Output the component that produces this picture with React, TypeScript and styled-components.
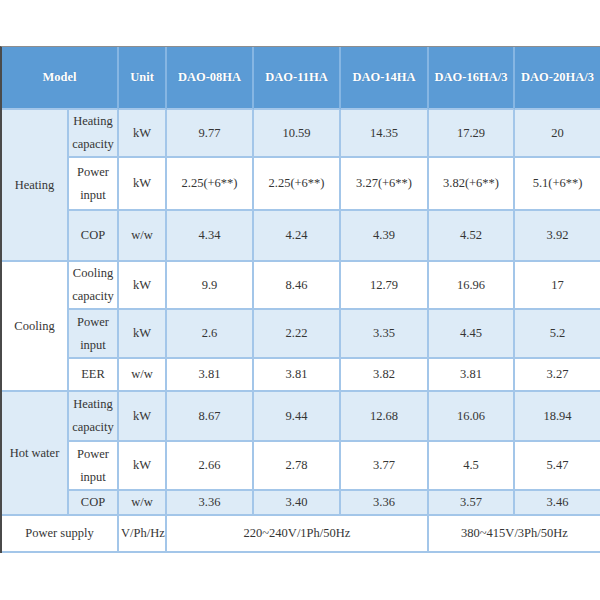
import React from 'react';
import styled, { createGlobalStyle } from 'styled-components';

const serif = '"Liberation Serif", "Times New Roman", serif';

const Global = createGlobalStyle`
  html, body { margin: 0; padding: 0; background: #ffffff; }
  body { font-family: ${serif}; }
`;

const Page = styled.div`
  width: 600px;
  height: 600px;
  padding-top: 46px;
  box-sizing: border-box;
  overflow: hidden;
  background: #ffffff;
`;

const Frame = styled.div`
  width: 602px;
  border-top: 1px solid #8e8e8e;
  border-left: 2px solid #4a4a4a;
  box-sizing: border-box;
`;

const Table = styled.table`
  width: 600px;
  table-layout: fixed;
  border-collapse: separate;
  border-spacing: 0;
  font-family: ${serif};
  font-size: 12.5px;
  line-height: 23px;
  color: #353535;
`;

const Row = styled.tr<{ $h: number }>`
  height: ${(p) => p.$h}px;
`;

const Head = styled.th`
  background: #5b9bd5;
  color: #ffffff;
  font-family: ${serif};
  font-size: 12.5px;
  font-weight: bold;
  text-align: center;
  vertical-align: middle;
  padding: 0 2px;
  border-right: 2px solid #86b6e3;
  border-bottom: 2px solid #a3c6e9;
  box-sizing: border-box;
  text-shadow: 0 0 1px rgba(40, 70, 110, 0.35);
`;

const Cell = styled.td<{ $light?: boolean }>`
  background: ${(p) => (p.$light ? '#ddebf7' : '#ffffff')};
  font-family: ${serif};
  font-size: 12.5px;
  line-height: 23px;
  color: #353535;
  text-align: center;
  vertical-align: middle;
  padding: 0 2px;
  border-right: 2px solid #a3c6e9;
  border-bottom: 2px solid #a3c6e9;
  box-sizing: border-box;
  white-space: normal;
`;

const NoWrap = styled(Cell)`
  white-space: nowrap;
`;

type Line = { label: string; unit: string; values: string[]; light: boolean; h: number };
type Group = { name: string; light: boolean; lines: Line[] };

const groups: Group[] = [
  {
    name: 'Heating',
    light: true,
    lines: [
      { label: 'Heating capacity', unit: 'kW', values: ['9.77', '10.59', '14.35', '17.29', '20'], light: true, h: 48 },
      { label: 'Power input', unit: 'kW', values: ['2.25(+6**)', '2.25(+6**)', '3.27(+6**)', '3.82(+6**)', '5.1(+6**)'], light: false, h: 53 },
      { label: 'COP', unit: 'w/w', values: ['4.34', '4.24', '4.39', '4.52', '3.92'], light: true, h: 51 },
    ],
  },
  {
    name: 'Cooling',
    light: false,
    lines: [
      { label: 'Cooling capacity', unit: 'kW', values: ['9.9', '8.46', '12.79', '16.96', '17'], light: false, h: 48 },
      { label: 'Power input', unit: 'kW', values: ['2.6', '2.22', '3.35', '4.45', '5.2'], light: true, h: 49 },
      { label: 'EER', unit: 'w/w', values: ['3.81', '3.81', '3.82', '3.81', '3.27'], light: false, h: 33 },
    ],
  },
  {
    name: 'Hot water',
    light: true,
    lines: [
      { label: 'Heating capacity', unit: 'kW', values: ['8.67', '9.44', '12.68', '16.06', '18.94'], light: true, h: 50 },
      { label: 'Power input', unit: 'kW', values: ['2.66', '2.78', '3.77', '4.5', '5.47'], light: false, h: 49 },
      { label: 'COP', unit: 'w/w', values: ['3.36', '3.40', '3.36', '3.57', '3.46'], light: true, h: 25 },
    ],
  },
];

const models = ['DAO-08HA', 'DAO-11HA', 'DAO-14HA', 'DAO-16HA/3', 'DAO-20HA/3'];
const widths = [67, 50, 48, 87, 87, 88, 86, 87];

export default function App() {
  return (
    <Page>
      <Global />
      <Frame>
        <Table>
          <colgroup>
            {widths.map((w, i) => (
              <col key={i} style={{ width: w }} />
            ))}
          </colgroup>
          <thead>
            <Row $h={63}>
              <Head colSpan={2}>Model</Head>
              <Head>Unit</Head>
              {models.map((m) => (
                <Head key={m}>{m}</Head>
              ))}
            </Row>
          </thead>
          <tbody>
            {groups.map((g) =>
              g.lines.map((l, i) => (
                <Row $h={l.h} key={g.name + l.label}>
                  {i === 0 && (
                    <Cell $light={g.light} rowSpan={g.lines.length}>
                      {g.name}
                    </Cell>
                  )}
                  <Cell $light={l.light}>{l.label}</Cell>
                  <NoWrap $light={l.light}>{l.unit}</NoWrap>
                  {l.values.map((v, k) => (
                    <NoWrap $light={l.light} key={k}>
                      {v}
                    </NoWrap>
                  ))}
                </Row>
              ))
            )}
            <Row $h={37}>
              <Cell colSpan={2}>Power supply</Cell>
              <NoWrap>V/Ph/Hz</NoWrap>
              <NoWrap colSpan={3}>220~240V/1Ph/50Hz</NoWrap>
              <NoWrap colSpan={2}>380~415V/3Ph/50Hz</NoWrap>
            </Row>
          </tbody>
        </Table>
      </Frame>
    </Page>
  );
}
